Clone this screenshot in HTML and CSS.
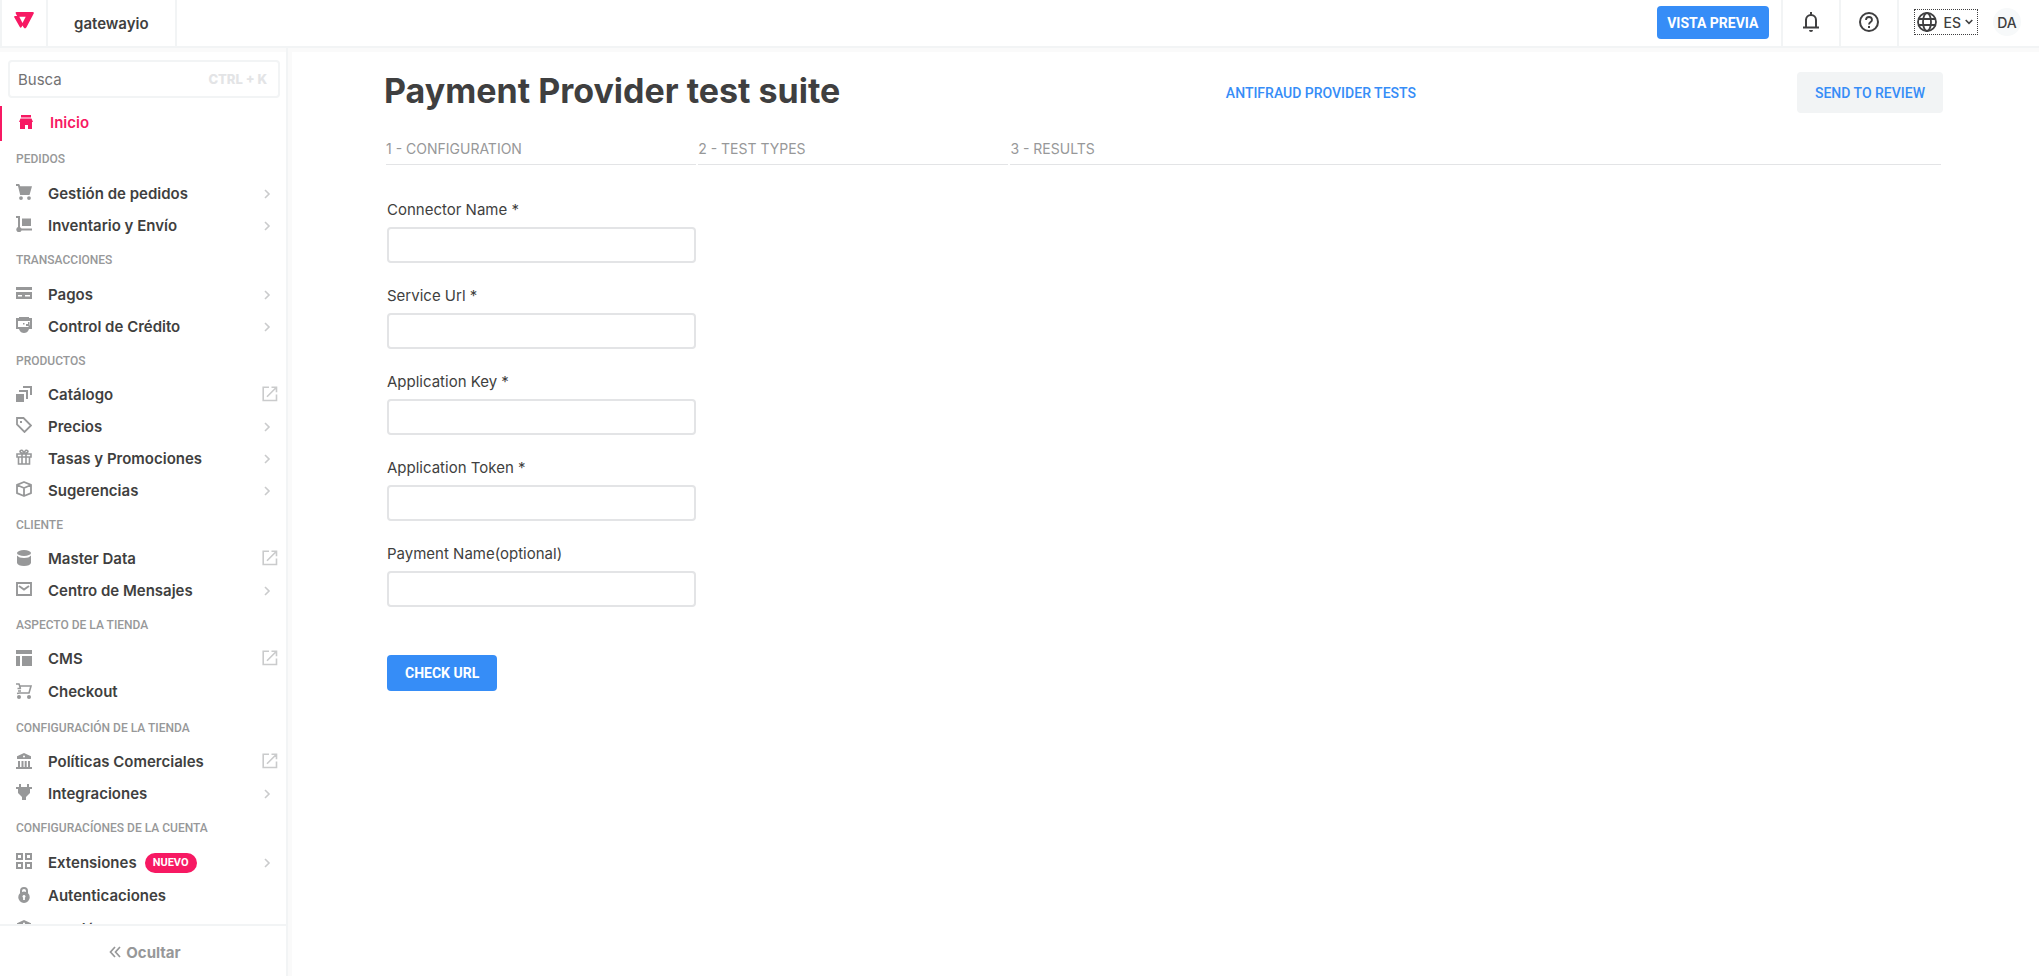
FILE: index.html
```html
<!DOCTYPE html>
<html lang="es">
<head>
<meta charset="utf-8">
<title>Payment Provider test suite</title>
<link rel="stylesheet" href="styles.css">
</head>
<body>
<svg class="sprite" aria-hidden="true">
  <symbol id="chevron" viewBox="0 0 16 16"><path d="M6 4l4 4-4 4" fill="none" stroke="currentColor" stroke-width="1.6"/></symbol>
  <symbol id="external" viewBox="0 0 16 16"><path d="M7 1.2H1.2v13.3h13.3V8.500M9.500 1.200h5v5M14.500 1.200L5 10.700" fill="none" stroke="currentColor" stroke-width="1.600"/></symbol>
  <symbol id="bank" viewBox="0 0 16 16"><path fill="currentColor" fill-rule="evenodd" d="M8 0l7 3.200V6H1V3.200zM8 2.500a1 1 0 100 2 1 1 0 000-2zM2 8h2v6H2zM5.500 8h2v6h-2zM8.700 8h2v6h-2zM12 8h2v6h-2zM0 14h16v2H0z"/></symbol>
</svg>
<header class="topbar">
  <a class="brand" href="#" aria-label="VTEX"><svg width="20" height="17" viewBox="0 0 20 17"><path fill="currentColor" fill-rule="evenodd" d="M2.500 0H18.500Q20.500 0 19.600 1.800L12.500 15.300Q11 17.600 9.500 15.300L8.500 13.500 7.600 15.100Q6.700 16.300 5.800 15L.4 5.600Q-.5 4 1.200 4H3.100L2 2Q1 .2 2.500 0zM5.300 4.800L8.500 10.900 11.700 4.800z"/></svg></a>
  <a class="account" href="#">gatewayio</a>
  <div class="actions">
    <div class="preview"><button class="btn primary small" type="button">VISTA PREVIA</button></div>
    <button class="tool" type="button" aria-label="Notificaciones"><svg width="16" height="20" viewBox="0 0 16 20"><path d="M3 15.500V8a5 5 0 0110 0v7.500M0 15.500h16" fill="none" stroke="currentColor" stroke-width="2"/><path fill="currentColor" d="M7 0h2v3H7zM6 18h4a2 2 0 01-4 0z"/></svg></button>
    <button class="tool" type="button" aria-label="Ayuda"><svg width="20" height="20" viewBox="0 0 20 20" fill="none" stroke="currentColor"><circle cx="10" cy="10" r="9" stroke-width="2"/><path d="M7 8a3 3 0 116 0c0 2-3 2.100-3 4.500" stroke-width="1.800"/><path d="M10 14v2" stroke-width="2"/></svg></button>
    <div class="user">
      <button class="lang" type="button"><svg width="20" height="20" viewBox="0 0 20 20" fill="none" stroke="currentColor" stroke-width="1.800"><circle cx="10" cy="10" r="9"/><ellipse cx="10" cy="10" rx="4" ry="9"/><path d="M1.500 7h17M1.500 13h17"/></svg><span>ES</span><svg width="8" height="6" viewBox="0 0 8 6"><path d="M.7 1L4 4.300 7.300 1" fill="none" stroke="currentColor" stroke-width="1.600"/></svg></button>
      <button class="avatar" type="button">DA</button>
    </div>
  </div>
</header>
<div class="shell">
  <aside class="sidebar">
    <div class="search"><input type="text" placeholder="Busca" aria-label="Busca"><kbd>CTRL + K</kbd></div>
    <nav class="nav">
      <a class="item tall active" href="#"><svg class="icon" viewBox="0 0 16 16"><path fill="currentColor" d="M3 1h10v2.500H3zM2.500 4.500h11L15 8H1zM2 8h12v7h-4v-4H7v4H2z"/></svg><span>Inicio</span></a>
      <h2>PEDIDOS</h2>
      <a class="item" href="#"><svg class="icon" viewBox="0 0 16 16"><path fill="currentColor" d="M0 0h3.200l1 2.300H16L13.500 11H4.200L2 2H0zM5 12.200a1.900 1.900 0 110 3.800 1.900 1.900 0 010-3.800zM13 12.200a1.900 1.900 0 110 3.800 1.900 1.900 0 010-3.800z"/></svg><span>Gestión de pedidos</span><svg class="more"><use href="#chevron"/></svg></a>
      <a class="item" href="#"><svg class="icon" viewBox="0 0 16 16"><path fill="currentColor" d="M0 0h4v11.200A3 3 0 015.500 12.500H16v2H5.500A2.700 2.700 0 112 11V2H0zM6 2.500h9V10H6z"/></svg><span>Inventario y Envío</span><svg class="more"><use href="#chevron"/></svg></a>
      <h2>TRANSACCIONES</h2>
      <a class="item" href="#"><svg class="icon" viewBox="0 0 16 16"><path fill="currentColor" fill-rule="evenodd" d="M0 2h16v3H0zM0 7h16v7H0zM2 10v1.500h4V10zM9 10v1.500h5V10z"/></svg><span>Pagos</span><svg class="more"><use href="#chevron"/></svg></a>
      <a class="item" href="#"><svg class="icon" viewBox="0 0 16 16"><path fill="currentColor" fill-rule="evenodd" d="M3 0h10v1h3v11h-3c-1 3-3 4-5 4s-4-1-5-4H0V1h3zM2 4v6h10l2-2V4zM7 6h1.500v1.500H7zM10 9V7h2V5h1.500v4z"/></svg><span>Control de Crédito</span><svg class="more"><use href="#chevron"/></svg></a>
      <h2>PRODUCTOS</h2>
      <a class="item link" href="#"><svg class="icon" viewBox="0 0 16 16"><path fill="currentColor" d="M0 8h8v8H0zM3 4h9v9h-2V6H3zM7 0h9v9h-2V2H7z"/></svg><span>Catálogo</span><svg class="out"><use href="#external"/></svg></a>
      <a class="item" href="#"><svg class="icon" viewBox="0 0 16 16"><path d="M1 1h6.500L15 8.500 8.500 15 1 7.500z" fill="none" stroke="currentColor" stroke-width="1.800"/><path fill="currentColor" d="M4 4h2v2H4z"/></svg><span>Precios</span><svg class="more"><use href="#chevron"/></svg></a>
      <a class="item" href="#"><svg class="icon" viewBox="0 0 16 16"><path d="M1 5h14v3H1zM2.500 8v7h11V8M6 5v10M10 5v10M8 4.500C6 4 4 4 4 2.500S7 0 8 4.500C9 0 12 1 12 2.500S10 4 8 4.500" fill="none" stroke="currentColor" stroke-width="1.600"/></svg><span>Tasas y Promociones</span><svg class="more"><use href="#chevron"/></svg></a>
      <a class="item" href="#"><svg class="icon" viewBox="0 0 16 16"><path d="M8 1l7 2.800v8.400L8 15l-7-2.800V3.800zM1 4l7 3 7-3M8 7v8" fill="none" stroke="currentColor" stroke-width="1.800" stroke-linejoin="round"/></svg><span>Sugerencias</span><svg class="more"><use href="#chevron"/></svg></a>
      <h2>CLIENTE</h2>
      <a class="item link" href="#"><svg class="icon" viewBox="0 0 16 16"><ellipse cx="8" cy="3" rx="7" ry="3" fill="currentColor"/><path fill="currentColor" d="M1 5.500Q3 8 8 8t7-2.500V13q-1 3-7 3t-7-3z"/></svg><span>Master Data</span><svg class="out"><use href="#external"/></svg></a>
      <a class="item" href="#"><svg class="icon" viewBox="0 0 16 16"><path d="M1 2h14v12H1zM3 5l5 3.500L13 5" fill="none" stroke="currentColor" stroke-width="1.900"/></svg><span>Centro de Mensajes</span><svg class="more"><use href="#chevron"/></svg></a>
      <h2>ASPECTO DE LA TIENDA</h2>
      <a class="item link" href="#"><svg class="icon" viewBox="0 0 16 16"><path fill="currentColor" d="M0 0h16v4H0zM0 6h4v10H0zM6 6h10v10H6z"/></svg><span>CMS</span><svg class="out"><use href="#external"/></svg></a>
      <a class="item tall" href="#"><svg class="icon" viewBox="0 0 16 16"><path d="M0 1h3l.7 2H15l-2 7H3.500L1 10.500M3.700 3l.8 3M1.500 5.500H5M2 8h3" fill="none" stroke="currentColor" stroke-width="1.600"/><circle cx="3" cy="14" r="2" fill="currentColor"/><circle cx="13" cy="14" r="2" fill="currentColor"/></svg><span>Checkout</span></a>
      <h2>CONFIGURACIÓN DE LA TIENDA</h2>
      <a class="item link" href="#"><svg class="icon"><use href="#bank"/></svg><span>Políticas Comerciales</span><svg class="out"><use href="#external"/></svg></a>
      <a class="item" href="#"><svg class="icon" viewBox="0 0 16 16"><path fill="currentColor" d="M3 0h2v3h6V0h2v3h3v2h-2v4l-4 4v3H6v-3L2 9V5H0V3h3z"/></svg><span>Integraciones</span><svg class="more"><use href="#chevron"/></svg></a>
      <h2>CONFIGURACÍONES DE LA CUENTA</h2>
      <a class="item" href="#"><svg class="icon" viewBox="0 0 16 16"><path d="M1 1h5v5H1zM10 1h5v5h-5zM1 10h5v5H1zM10 10h5v5h-5z" fill="none" stroke="currentColor" stroke-width="2"/></svg><span>Extensiones</span><em class="badge">NUEVO</em><svg class="more"><use href="#chevron"/></svg></a>
      <a class="item tall" href="#"><svg class="icon" viewBox="0 0 16 16"><path d="M5 6V4a3 3 0 016 0v2" fill="none" stroke="currentColor" stroke-width="2"/><path fill="currentColor" fill-rule="evenodd" d="M8 4.500a5.700 5.700 0 110 11.500A5.700 5.700 0 018 4.500zM8 8a1.500 1.500 0 00-.9 2.700V13h1.800v-2.300A1.500 1.500 0 008 8z"/></svg><span>Autenticaciones</span></a>
      <a class="item" href="#"><svg class="icon"><use href="#bank"/></svg><span>Gestión de la cuenta</span></a>
    </nav>
    <button class="collapse" type="button"><svg width="12" height="12" viewBox="0 0 12 12"><path d="M6 1L1.500 6 6 11M11 1L6.500 6 11 11" fill="none" stroke="currentColor" stroke-width="1.700"/></svg>Ocultar</button>
  </aside>
  <main class="content">
    <div class="heading">
      <h1>Payment Provider test suite</h1>
      <a class="alt" href="#">ANTIFRAUD PROVIDER TESTS</a>
      <button class="btn review" type="button">SEND TO REVIEW</button>
    </div>
    <ol class="steps"><li>1 - CONFIGURATION</li><li>2 - TEST TYPES</li><li>3 - RESULTS</li></ol>
    <form class="form">
      <div class="field"><label for="connector">Connector Name *</label><input id="connector" type="text"></div>
      <div class="field"><label for="service">Service Url *</label><input id="service" type="text"></div>
      <div class="field"><label for="key">Application Key *</label><input id="key" type="text"></div>
      <div class="field"><label for="token">Application Token *</label><input id="token" type="text"></div>
      <div class="field"><label for="payment">Payment Name(optional)</label><input id="payment" type="text"></div>
      <button class="btn primary check" type="button">CHECK URL</button>
    </form>
  </main>
</div>
</body>
</html>
```
FILE: styles.css
```css
* { box-sizing: border-box; }
body {
  margin: 0;
  height: 100vh;
  display: flex;
  flex-direction: column;
  overflow: hidden;
  background: #fff;
  color: #3f3f40;
  font-family: Inter, "Liberation Sans", sans-serif;
  font-size: 15px;
}
button, input, kbd { font-family: inherit; color: inherit; }
button { border: 0; padding: 0; background: none; cursor: pointer; }
a { color: inherit; text-decoration: none; }
svg { display: block; flex: none; }
.sprite { width: 0; height: 0; position: absolute; }

.topbar {
  display: flex;
  flex: none;
  height: 48px;
  border-left: 2px solid #f2f4f5;
  border-bottom: 2px solid #f2f4f5;
  box-shadow: 0 4px 0 #fafafa;
}
.brand {
  width: 46px;
  padding: 12px 0 0 12px;
  border-right: 2px solid #f2f4f5;
  color: #f71963;
}
.account {
  display: flex;
  align-items: center;
  padding: 0 26px;
  border-right: 2px solid #f2f4f5;
  font-weight: 600;
}
.actions { display: flex; margin-left: auto; }
.preview { padding: 6px 12px 0; }
.tool {
  display: flex;
  width: 58px;
  padding-bottom: 2px;
  align-items: center;
  justify-content: center;
  border-left: 2px solid #f2f4f5;
}
.user {
  display: flex;
  align-items: center;
  gap: 15px;
  padding: 0 18px 2px 15px;
  border-left: 2px solid #f2f4f5;
}
.lang {
  display: flex;
  align-items: center;
  gap: 4px;
  height: 26px;
  padding: 0 4px 0 2px;
  border: 1px dotted #3f3f40;
  font-size: 14px;
  font-weight: 500;
}
.lang span { padding-left: 3px; }
.avatar {
  width: 28px;
  height: 28px;
  border-radius: 50%;
  background: #f7f9fa;
  font-size: 14px;
  font-weight: 500;
  white-space: nowrap;
}

.btn {
  border-radius: 4px;
  padding: 0 18px;
  height: 36px;
  font-family: Roboto, sans-serif;
  font-size: 14px;
  font-weight: 700;
}
.primary { background: #368df7; color: #fff; }
.small { height: 33px; padding: 0 10px; }

.shell { display: flex; flex: 1; min-height: 0; }
.sidebar {
  display: flex;
  flex-direction: column;
  flex: none;
  width: 288px;
  border-right: 2px solid #f2f4f5;
  box-shadow: 4px 0 0 #fafafa;
}
.search {
  display: flex;
  align-items: center;
  height: 38px;
  margin: 12px 6px 8px 8px;
  padding: 0 11px 0 8px;
  border: 2px solid #f2f4f5;
  border-radius: 4px;
}
.search input {
  flex: 1;
  min-width: 0;
  padding: 0;
  border: 0;
  outline: 0;
  font-size: 15px;
}
.search input::placeholder { color: #727273; }
.search kbd { color: #e3e4e6; font-size: 13px; font-weight: 800; }
.nav { flex: 1; min-height: 0; overflow: hidden; }
.nav h2 {
  margin: 0;
  padding-left: 16px;
  color: #979899;
  font-family: Roboto, sans-serif;
  font-size: 12px;
  font-weight: 500;
  line-height: 37px;
}
.item {
  display: flex;
  align-items: center;
  height: 32px;
  padding: 0 8px 0 16px;
  font-weight: 600;
}
.item span { padding-bottom: 2px; }
.item.link { height: 31px; }
.item.tall { height: 35px; }
.icon {
  width: 16px;
  height: 16px;
  margin: 0 16px 4px 0;
  color: #979899;
}
.active { color: #f71963; border-left: 2px solid #f71963; }
.active .icon { color: inherit; }
.more { width: 16px; height: 16px; margin: 0 3px 0 auto; color: #cacbcc; }
.out { width: 16px; height: 16px; margin: 0 0 4px auto; color: #cacbcc; }
.badge {
  margin-left: 8px;
  padding: 0 8px;
  border-radius: 10px;
  background: #f71963;
  color: #fff;
  font-family: Roboto, sans-serif;
  font-size: 11px;
  font-style: normal;
  font-weight: 700;
  line-height: 20px;
}
.collapse {
  display: flex;
  flex: none;
  align-items: center;
  justify-content: center;
  gap: 5px;
  height: 52px;
  padding: 2px 0 0 4px;
  border-top: 2px solid #f2f4f5;
  color: #979899;
  font-size: 15px;
  font-weight: 700;
}

.content { flex: 1; min-width: 0; padding: 24px 96px; }
.heading { display: grid; grid-template-columns: 54% 1fr auto; align-items: center; }
h1 { margin: 0; padding-bottom: 4px; font-size: 34px; line-height: 37px; font-weight: 700; }
.alt { color: #368df7; font-family: Roboto, sans-serif; font-size: 14px; font-weight: 500; }
.review { height: 41px; background: #f2f4f5; color: #368df7; font-weight: 500; }
.steps {
  display: grid;
  grid-template-columns: 1fr 1fr 3fr;
  gap: 2px;
  margin: 26px 2px 0;
  padding: 0;
  list-style: none;
}
.steps li {
  height: 26px;
  border-bottom: 1px solid #e3e4e6;
  color: #979899;
  font-size: 14px;
  line-height: 20px;
}
.form { width: 20%; padding: 35px 0 0 3px; }
.field { margin-bottom: 23px; }
.field label { display: block; height: 27px; line-height: 20px; font-size: 15px; }
.field input {
  display: block;
  width: 100%;
  height: 36px;
  padding: 0 12px;
  border: 2px solid #e3e4e6;
  border-radius: 4px;
  background: #fff;
}
.check { margin-top: 25px; }
```
